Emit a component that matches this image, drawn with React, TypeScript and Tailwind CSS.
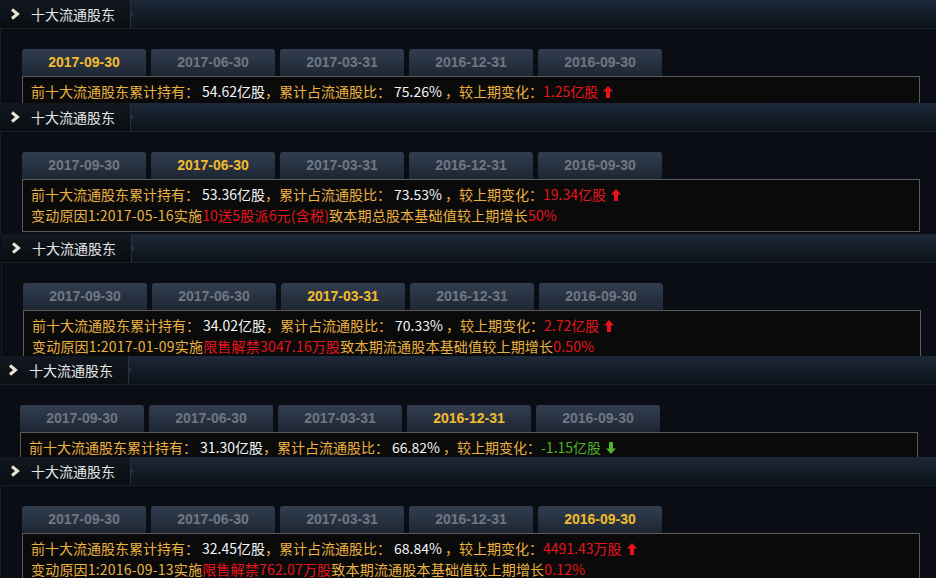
import React from 'react';

type Tone = 'g' | 'w' | 'r' | 'e';
type Seg = [string, Tone];

interface PanelData {
  active: number;
  held: string;
  ratio: string;
  change: string;
  up: boolean;
  reason?: Seg[];
  height: string;
  shift: string;
}

const DATES = ['2017-09-30', '2017-06-30', '2017-03-31', '2016-12-31', '2016-09-30'];

const toneClass: Record<Tone, string> = {
  g: 'text-[#ecb141]',
  w: 'text-[#f4f6f8]',
  r: 'text-[#e8141c]',
  e: 'text-[#4cb32b]',
};

const PANELS: PanelData[] = [
  { active: 0, held: '54.62亿股', ratio: '75.26%', change: '1.25亿股', up: true, height: 'h-[103px]', shift: 'ml-0' },
  {
    active: 1, held: '53.36亿股', ratio: '73.53%', change: '19.34亿股', up: true, height: 'h-[131px]', shift: 'ml-0',
    reason: [['变动原因1:2017-05-16实施', 'g'], ['10送5股派6元(含税)', 'r'], ['致本期总股本基础值较上期增长', 'g'], ['50%', 'r']],
  },
  {
    active: 2, held: '34.02亿股', ratio: '70.33%', change: '2.72亿股', up: true, height: 'h-[122px]', shift: 'ml-[1px]',
    reason: [['变动原因1:2017-01-09实施', 'g'], ['限售解禁3047.16万股', 'r'], ['致本期流通股本基础值较上期增长', 'g'], ['0.50%', 'r']],
  },
  { active: 3, held: '31.30亿股', ratio: '66.82%', change: '-1.15亿股', up: false, height: 'h-[101px]', shift: '-ml-[2px]' },
  {
    active: 4, held: '32.45亿股', ratio: '68.84%', change: '4491.43万股', up: true, height: 'h-[121px]', shift: 'ml-0',
    reason: [['变动原因1:2016-09-13实施', 'g'], ['限售解禁762.07万股', 'r'], ['致本期流通股本基础值较上期增长', 'g'], ['0.12%', 'r']],
  },
];

function Arrow({ up }: { up: boolean }) {
  return (
    <svg width="10" height="12" viewBox="0 0 10 12" className={`ml-[5px] inline-block ${up ? 'text-[#e8141c]' : 'text-[#4cb32b]'}`}>
      {up ? (
        <polygon points="5,0 10,5.5 7,5.5 7,12 3,12 3,5.5 0,5.5" fill="currentColor" />
      ) : (
        <polygon points="5,12 10,6.5 7,6.5 7,0 3,0 3,6.5 0,6.5" fill="currentColor" />
      )}
    </svg>
  );
}

function Header() {
  return (
    <div className="flex h-[29px] bg-gradient-to-b from-[#1c2839] to-[#0c1219] border-b border-[#19212d]">
      <div className="relative flex items-center w-[131px] h-full bg-gradient-to-b from-[#121820] to-[#0a0e13] border-r border-[#263142]">
        <svg width="12" height="12" viewBox="0 0 12 12" className="ml-[9px] mr-[10px]">
          <path d="M3 1.5 L8.5 6 L3 10.5" fill="none" stroke="#ece4d2" strokeWidth="3" />
        </svg>
        <span className="text-[14px] text-[#e6e6e6]">十大流通股东</span>
        <span className="absolute right-[-4px] top-[11px] w-0 h-0 border-y-[3px] border-y-transparent border-l-[3px] border-l-[#263142]" />
      </div>
      <div className="flex-1" />
    </div>
  );
}

function Panel({ p }: { p: PanelData }) {
  return (
    <div className={`${p.height} ${p.shift} overflow-hidden shrink-0`}>
      <Header />
      <div className="h-full border-l border-[#161d28] pl-[21px] pt-[20px]">
        <div className="flex gap-[5px] h-[27px]">
          {DATES.map((d, i) => (
            <div
              key={d}
              className={`w-[124px] h-full rounded-t-[3px] bg-gradient-to-b from-[#323e50] to-[#1d2633] flex items-center justify-center font-bold text-[14px] font-['Liberation_Sans',sans-serif] ${
                i === p.active ? 'text-[#f2bc2e]' : 'text-[#6f7782]'
              }`}
            >
              {d}
            </div>
          ))}
        </div>
        <div className="w-[898px] border border-[#5a5a5a] bg-[#0a0a0a] px-[8px] pt-[4px] pb-[5px] text-[14px] leading-[21px] [text-spacing-trim:space-all]">
          <div className="flex items-center whitespace-nowrap">
            <span className={toneClass.g}>前十大流通股东累计持有：</span>
            <span className={`ml-[3px] ${toneClass.w}`}>{p.held}</span>
            <span className={toneClass.g}>，累计占流通股比：</span>
            <span className={`ml-[3px] ${toneClass.w}`}>{p.ratio}</span>
            <span className={toneClass.g}>&nbsp;，较上期变化：</span>
            <span className={p.up ? toneClass.r : toneClass.e}>{p.change}</span>
            <Arrow up={p.up} />
          </div>
          {p.reason && (
            <div className="whitespace-nowrap tracking-[0.2px]">
              {p.reason.map(([t, c], i) => (
                <span key={i} className={toneClass[c]}>
                  {t}
                </span>
              ))}
            </div>
          )}
        </div>
      </div>
    </div>
  );
}

export default function App() {
  return (
    <div className="w-[936px] h-[578px] overflow-hidden bg-[#0a0d13] flex flex-col font-['Noto_Sans_CJK_SC','Noto_Sans',sans-serif]">
      {PANELS.map((p, i) => (
        <Panel key={i} p={p} />
      ))}
    </div>
  );
}
